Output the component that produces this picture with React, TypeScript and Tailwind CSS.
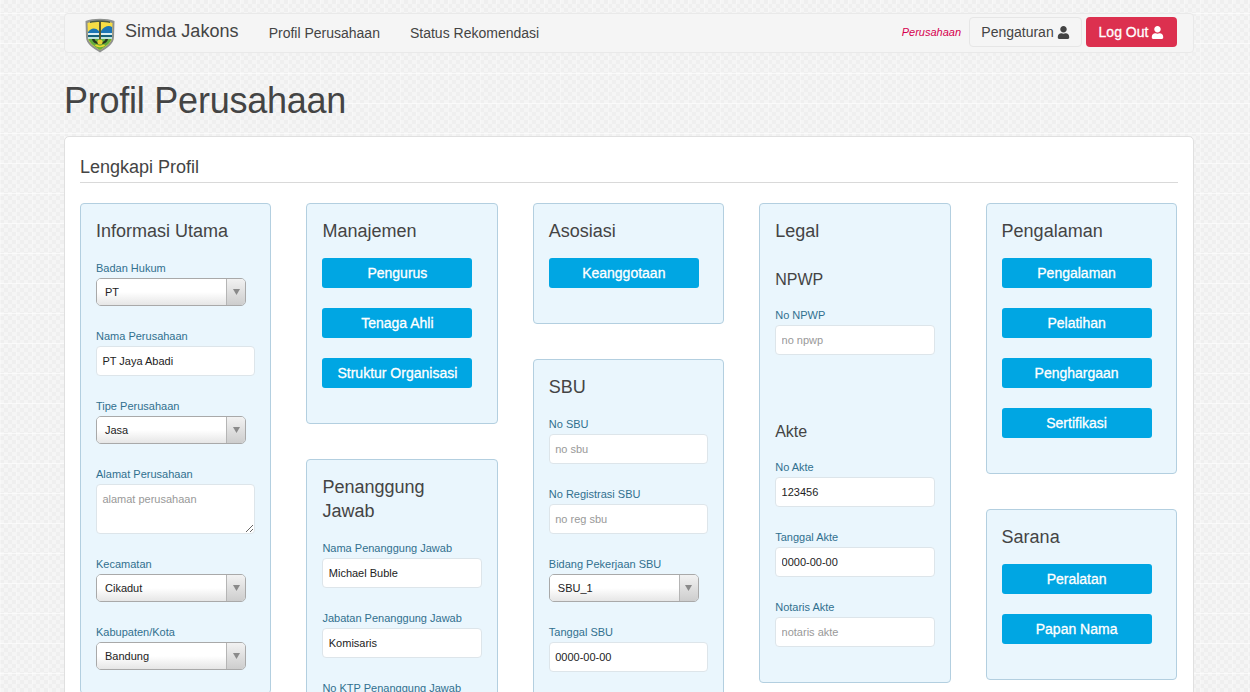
import type { ReactNode } from "react";
import { FaUser } from "react-icons/fa";

const Logo = () => (
  <svg width="30" height="36" viewBox="0 0 30 36" className="shrink-0 mt-[3px]">
    <path d="M0.5 4 C8 1 22 1 29.5 4 L29 20 C29 27 22 31 15 35.5 C8 31 1 27 1 20 Z" fill="#8f928f" />
    <path d="M2.5 6 C9 3.5 21 3.5 27.5 6 L27 20 C27 26 21 29.5 15 33 C9 29.5 3 26 3 20 Z" fill="#f7dd45" />
    <path d="M5 4.6 C11 3.2 19 3.2 25 4.6 L25 6 C19 4.6 11 4.6 5 6 Z" fill="#4b5a45" />
    <path d="M3 15 C6 11 10 10 14 14 L16 14 C19 9 24 8 27 10 L27 17 L3 17 Z" fill="#1b75b5" />
    <path d="M3 16 L27 16 L27 18 L3 18 Z" fill="#d9eef2" />
    <path d="M3 18 L27 18 L27 20 L3 20 Z" fill="#14607a" />
    <path d="M3 20 L27 20 L27 22 L3 22 Z" fill="#bfe3dc" />
    <path d="M3.5 22 L26.5 22 C25 27 20 29.5 15 33 C10 29.5 5 27 3.5 22 Z" fill="#63ad3d" />
    <path d="M7 22 C8 29 22 29 23 22 L20.5 22 C19.5 26.5 10.5 26.5 9.5 22 Z" fill="#27351c" />
    <path d="M9.5 28 C12 31 18 31 20.5 28 L18 27.5 C17 29 13 29 12 27.5 Z" fill="#ecd82f" />
    <rect x="14" y="5" width="2" height="22" fill="#5a5a2c" />
    <circle cx="15" cy="25" r="2.6" fill="#e6cf33" />
  </svg>
);

const Well = ({ children, className = "" }: { children: ReactNode; className?: string }) => (
  <div className={`bg-[#eaf6fd] border border-[#b3cfe0] rounded-[4px] px-[15px] pt-[15px] ${className}`}>
    {children}
  </div>
);

const Title = ({ children }: { children: ReactNode }) => (
  <h3 className="text-[18px] leading-[24px] text-[#444] mb-[18px]">{children}</h3>
);

const Label = ({ children }: { children: ReactNode }) => (
  <div className="text-[11px] leading-[14px] text-[#31708f] mb-[3px] whitespace-nowrap">{children}</div>
);

const TextField = ({ label, value, placeholder }: { label: string; value?: string; placeholder?: string }) => (
  <div className="mb-[23px]">
    <Label>{label}</Label>
    <input
      readOnly
      value={value ?? ""}
      placeholder={placeholder}
      className="block w-full h-[30px] px-[5.4px] text-[11px] text-[#222] placeholder:text-[#999] bg-white border border-[#dde5ea] rounded-[4px] outline-none"
    />
  </div>
);

const AreaField = ({ label, placeholder }: { label: string; placeholder: string }) => (
  <div className="mb-[23px]">
    <Label>{label}</Label>
    <textarea
      readOnly
      placeholder={placeholder}
      className="block w-full h-[50px] px-[5.4px] py-[6px] text-[11px] leading-[16px] placeholder:text-[#999] bg-white border border-[#dde5ea] rounded-[4px] outline-none"
    />
  </div>
);

const SelectField = ({ label, value }: { label: string; value: string }) => (
  <div className="mb-[23px]">
    <Label>{label}</Label>
    <div className="flex w-[150px] h-[28px] border border-[#a9a9a9] rounded-[5px] overflow-hidden text-[11px] text-[#222]">
      <div className="flex-1 flex items-center pl-[8px] bg-gradient-to-b from-white from-50% to-[#e6e6e6]">{value}</div>
      <div className="w-[19px] flex items-center justify-center border-l border-[#b5b5b5] bg-gradient-to-b from-[#f2f2f2] to-[#cdcdcd]">
        <svg width="7" height="6" viewBox="0 0 7 6">
          <path d="M0 0 H7 L3.5 6 Z" fill="#8a8a8a" />
        </svg>
      </div>
    </div>
  </div>
);

const BlueButton = ({ children }: { children: ReactNode }) => (
  <button className="block w-[150px] h-[30px] mb-[20px] bg-[#00a6e3] text-white text-[14px] rounded-[3px] [-webkit-text-stroke:0.3px]">
    {children}
  </button>
);

const Buttons = ({ title, items }: { title: string; items: string[] }) => (
  <Well className="pb-[15px]">
    <h3 className="text-[18px] leading-[24px] text-[#444] mb-[15px]">{title}</h3>
    {items.map((item) => (
      <BlueButton key={item}>{item}</BlueButton>
    ))}
  </Well>
);

const Column = ({ children }: { children: ReactNode }) => (
  <div className="flex flex-col gap-[35px]">{children}</div>
);

export default function App() {
  return (
    <div
      className="h-[692px] overflow-hidden px-[64px] pt-[13px] text-[#333] bg-[linear-gradient(#ffffff99_1px,transparent_1px),linear-gradient(90deg,#ffffff55_1px,transparent_1px),repeating-conic-gradient(#efefef_0_25%,#f5f5f5_0_50%)] bg-[length:30px_30px,16px_16px,8px_8px] bg-[position:0_13px,0_0,0_0]"
      style={{ fontFamily: '"Liberation Sans", Arial, sans-serif' }}
    >
      <nav className="flex items-center h-[40px] w-[1130px] bg-[#f5f5f5] border border-[#e9e9e9] rounded-[4px] pl-[20px] pr-[16px]">
        <Logo />
        <span className="ml-[10px] mb-[3px] text-[18px] tracking-[0.05px] text-[#444]">Simda Jakons</span>
        <a className="ml-[30px] text-[14px] text-[#444]">Profil Perusahaan</a>
        <a className="ml-[30px] text-[14px] text-[#444]">Status Rekomendasi</a>
        <div className="ml-auto mb-[2px] flex items-center">
          <i className="text-[11px] text-[#d6004f] mr-[8px]">Perusahaan</i>
          <button className="flex items-center justify-center gap-[3px] w-[113px] h-[30px] text-[14px] text-[#444] border border-[#e6e6e6] rounded-[4px]">
            Pengaturan <FaUser className="text-[13px]" />
          </button>
          <button className="ml-[4px] flex items-center justify-center gap-[3px] w-[91px] h-[30px] text-[14px] text-white bg-[#dc304f] rounded-[4px] [-webkit-text-stroke:0.3px]">
            Log Out <FaUser className="text-[13px]" />
          </button>
        </div>
      </nav>

      <h1 className="mt-[28px] text-[36px] leading-[40px] tracking-[-0.24px] text-[#444]">Profil Perusahaan</h1>

      <section className="mt-[15px] w-[1130px] bg-white border border-[#e0e0e0] rounded-[5px] px-[15px] pt-[19px]">
        <h2 className="text-[18px] leading-[22px] text-[#444] pb-[4px] border-b border-[#d9d9d9]">Lengkapi Profil</h2>

        <div className="mt-[20px] w-[1097px] grid grid-cols-5 gap-[35px] items-start">
          <Column>
            <Well>
              <Title>Informasi Utama</Title>
              <SelectField label="Badan Hukum" value="PT" />
              <TextField label="Nama Perusahaan" value="PT Jaya Abadi" />
              <SelectField label="Tipe Perusahaan" value="Jasa" />
              <AreaField label="Alamat Perusahaan" placeholder="alamat perusahaan" />
              <SelectField label="Kecamatan" value="Cikadut" />
              <SelectField label="Kabupaten/Kota" value="Bandung" />
            </Well>
          </Column>

          <Column>
            <Buttons title="Manajemen" items={["Pengurus", "Tenaga Ahli", "Struktur Organisasi"]} />
            <Well>
              <Title>
                Penanggung
                <br />
                Jawab
              </Title>
              <TextField label="Nama Penanggung Jawab" value="Michael Buble" />
              <TextField label="Jabatan Penanggung Jawab" value="Komisaris" />
              <TextField label="No KTP Penanggung Jawab" placeholder="no ktp" />
            </Well>
          </Column>

          <Column>
            <Buttons title="Asosiasi" items={["Keanggotaan"]} />
            <Well>
              <Title>SBU</Title>
              <TextField label="No SBU" placeholder="no sbu" />
              <TextField label="No Registrasi SBU" placeholder="no reg sbu" />
              <SelectField label="Bidang Pekerjaan SBU" value="SBU_1" />
              <TextField label="Tanggal SBU" value="0000-00-00" />
            </Well>
          </Column>

          <Column>
            <Well className="pb-[12px]">
              <h3 className="text-[18px] leading-[24px] text-[#444] mb-[25px]">Legal</h3>
              <h4 className="text-[16px] leading-[24px] text-[#444] mb-[16px]">NPWP</h4>
              <TextField label="No NPWP" placeholder="no npwp" />
              <h4 className="mt-[65px] text-[16px] leading-[24px] text-[#444] mb-[16px]">Akte</h4>
              <TextField label="No Akte" value="123456" />
              <TextField label="Tanggal Akte" value="0000-00-00" />
              <TextField label="Notaris Akte" placeholder="notaris akte" />
            </Well>
          </Column>

          <Column>
            <Buttons title="Pengalaman" items={["Pengalaman", "Pelatihan", "Penghargaan", "Sertifikasi"]} />
            <Buttons title="Sarana" items={["Peralatan", "Papan Nama"]} />
          </Column>
        </div>
      </section>
    </div>
  );
}
